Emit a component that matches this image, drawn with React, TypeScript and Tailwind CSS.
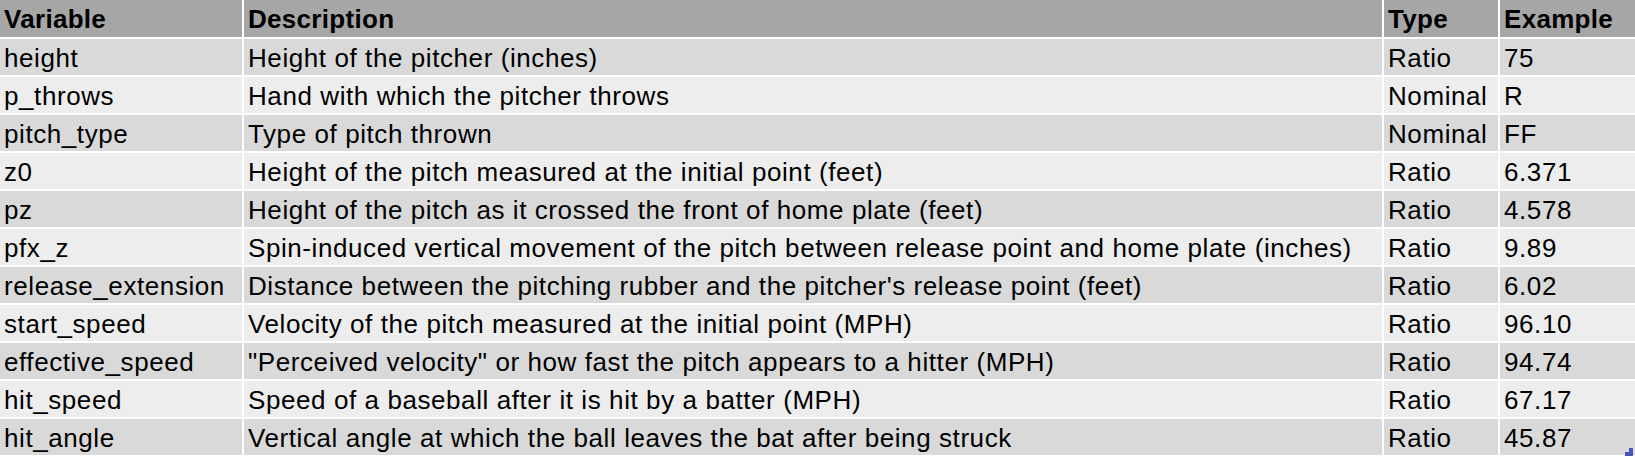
const rows = [
  ['height', 'Height of the pitcher (inches)', 'Ratio', '75'],
  ['p_throws', 'Hand with which the pitcher throws', 'Nominal', 'R'],
  ['pitch_type', 'Type of pitch thrown', 'Nominal', 'FF'],
  ['z0', 'Height of the pitch measured at the initial point (feet)', 'Ratio', '6.371'],
  ['pz', 'Height of the pitch as it crossed the front of home plate (feet)', 'Ratio', '4.578'],
  ['pfx_z', 'Spin-induced vertical movement of the pitch between release point and home plate (inches)', 'Ratio', '9.89'],
  ['release_extension', "Distance between the pitching rubber and the pitcher's release point (feet)", 'Ratio', '6.02'],
  ['start_speed', 'Velocity of the pitch measured at the initial point (MPH)', 'Ratio', '96.10'],
  ['effective_speed', '"Perceived velocity" or how fast the pitch appears to a hitter (MPH)', 'Ratio', '94.74'],
  ['hit_speed', 'Speed of a baseball after it is hit by a batter (MPH)', 'Ratio', '67.17'],
  ['hit_angle', 'Vertical angle at which the ball leaves the bat after being struck', 'Ratio', '45.87'],
];

const headers = ['Variable', 'Description', 'Type', 'Example'];

const App = () => {
  return (
    <div className="relative w-[1635px] h-[458px] bg-white font-['Liberation_Sans',Arial,sans-serif] text-black text-[26px] tracking-[0.58px] overflow-hidden">
      <div className="grid grid-cols-[242px_1138px_114px_135px] grid-rows-[37px] auto-rows-[36px] gap-[2px]">
        {headers.map((h) => (
          <div key={h} className="bg-[#a6a6a6] font-bold tracking-[0.3px] flex items-center pl-[4px] pt-[2px] whitespace-nowrap">
            {h}
          </div>
        ))}
        {rows.map((r, i) =>
          r.map((cell, j) => (
            <div
              key={i + '-' + j}
              className={
                'flex items-center pl-[4px] pt-[2px] whitespace-nowrap ' +
                (i % 2 === 0 ? 'bg-[#d9d9d9]' : 'bg-[#ededed]')
              }
            >
              {cell}
            </div>
          ))
        )}
      </div>
      {/* resize handle in the corner */}
      <div className="absolute left-[1629px] top-[448px] w-[4px] h-[4px] bg-[#4558b8]" />
      <div className="absolute left-[1625px] top-[452px] w-[8px] h-[4px] bg-[#4558b8]" />
    </div>
  );
};

export default App;
